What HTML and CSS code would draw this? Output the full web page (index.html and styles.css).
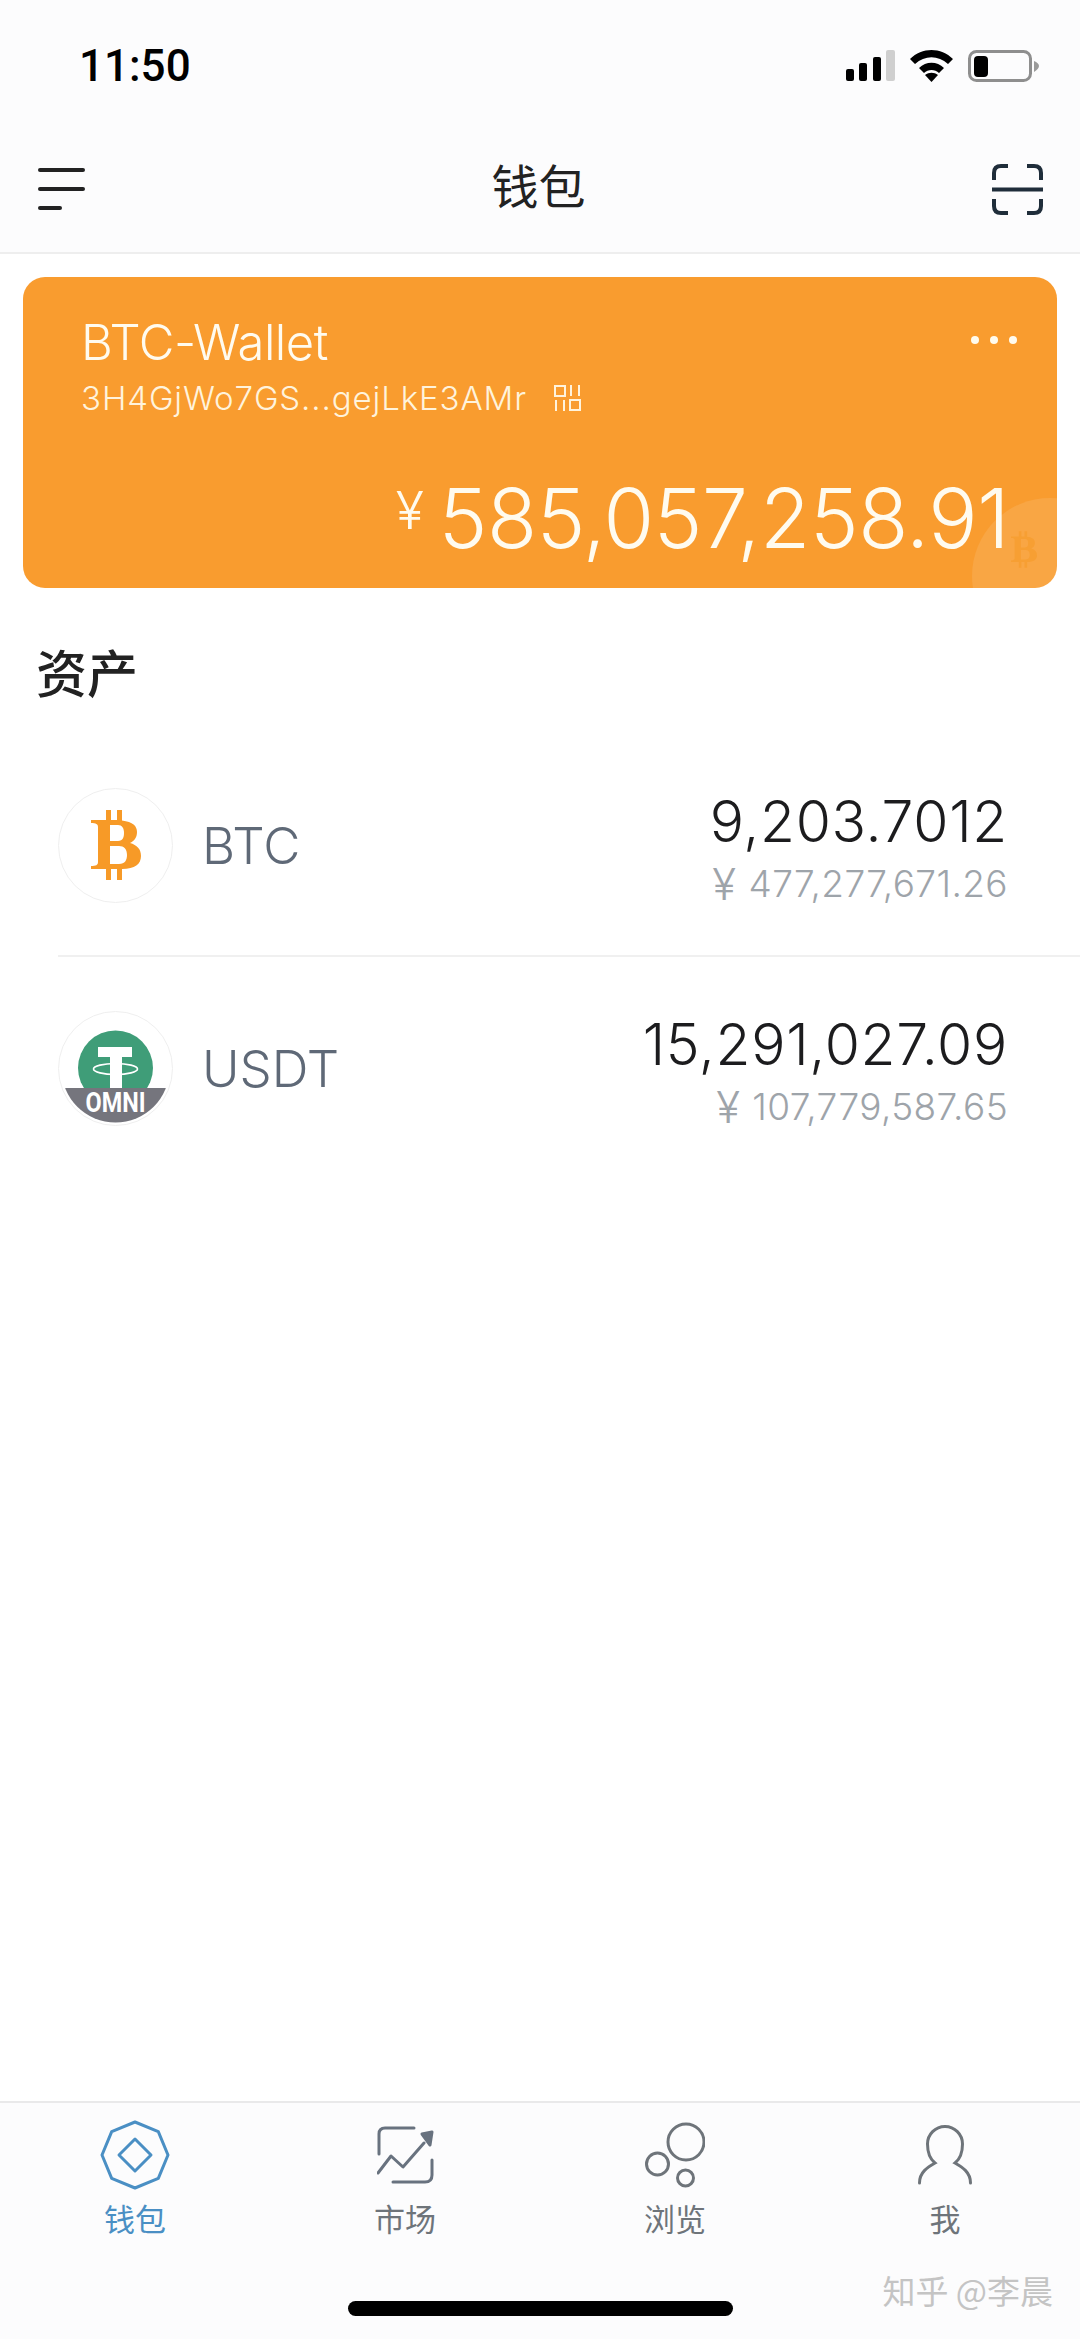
FILE: index.html
```html
<!DOCTYPE html>
<html lang="zh-CN">
<head>
  <meta charset="UTF-8">
  <meta name="viewport" content="width=device-width, initial-scale=1.0">
  <title>钱包</title>
  <link rel="stylesheet" href="styles.css">
</head>
<body>
  <div class="app">
    <div class="status">
      <span class="time">11:50</span>
      <div class="status-icons">
        <svg class="signal" width="49" height="32" viewBox="0 0 49 32">
          <rect x="0" y="19" width="8" height="12" rx="2" fill="#000"/>
          <rect x="13" y="13" width="8" height="18" rx="2" fill="#000"/>
          <rect x="27" y="7" width="8" height="24" rx="2" fill="#000"/>
          <rect x="40" y="0" width="9" height="31" rx="2" fill="#cfcfcf"/>
        </svg>
        <svg width="43" height="32" viewBox="0 0 43 32">
          <path d="M0 9C12-3 31-3 43 9L38 14C28 5 15 5 5 14Z" fill="#000"/>
          <path d="M9 18C16 11 27 11 34 18L29 23C25 19 18 19 14 23Z" fill="#000"/>
          <path d="M21.5 32L15 25C19 22 24 22 28 25Z" fill="#000"/>
        </svg>
        <svg width="71" height="32" viewBox="0 0 71 32">
          <rect x="1.5" y="1.5" width="61" height="29" rx="7" fill="none" stroke="#8e8e8e" stroke-width="3"/>
          <rect x="6" y="6" width="14" height="21" rx="4" fill="#000"/>
          <path d="M66 11C69 12 71 14 71 16C71 18 69 20 66 22Z" fill="#9a9a9a"/>
        </svg>
      </div>
    </div>

    <div class="nav">
      <div class="menu-icon"><i></i><i></i><i class="short"></i></div>
      <span class="nav-title">钱包</span>
      <svg width="51" height="51" viewBox="0 0 51 51" fill="none" stroke="#1f2d3a" stroke-width="4">
        <path d="M16 2H9Q2 2 2 9V16"/>
        <path d="M35 2H42Q49 2 49 9V16"/>
        <path d="M2 35V42Q2 49 9 49H16"/>
        <path d="M49 35V42Q49 49 42 49H35"/>
        <path d="M0 25.5H51"/>
      </svg>
    </div>

    <div class="card">
      <div class="card-corner">
        <svg width="26" height="37" viewBox="0 0 50 70">
          <path fill="#f79f33" fill-rule="evenodd" d="M15 0H20V10H26V0H31V10.5C42 12 46 16 46 22C46 28 43 31 39 33C46 35 50 39 50 46C50 54 44 59 31 59V70H26V59H20V70H15V59H0V56C5 56 7 55 7 52V17C7 14 5 13 0 13V10H15ZM19 15V31H27C32 31 33 27 33 23C33 18 31 15 27 15ZM19 36V54H28C34 54 36 50 36 45C36 39 33 36 28 36Z"/>
        </svg>
      </div>
      <div class="card-head">
        <span class="card-name">BTC-Wallet</span>
        <div class="dots"><i></i><i></i><i></i></div>
      </div>
      <div class="card-address">
        <span>3H4GjWo7GS...gejLkE3AMr</span>
        <svg width="27" height="26" viewBox="0 0 27 26" fill="none" stroke="#fff3dc" stroke-width="2">
          <rect x="1" y="1" width="10" height="10"/>
          <rect x="16" y="15" width="10" height="10"/>
          <path d="M17 0V11M25 0V11M2 15V26M10 15V26"/>
        </svg>
      </div>
      <div class="card-total"><span class="yen">¥</span><span class="total">585,057,258.91</span></div>
    </div>

    <h3 class="section-title">资产</h3>

    <div class="asset">
      <div class="coin">
        <svg width="50" height="70" viewBox="0 0 50 70">
          <path fill="#f79a27" fill-rule="evenodd" d="M15 0H20V10H26V0H31V10.5C42 12 46 16 46 22C46 28 43 31 39 33C46 35 50 39 50 46C50 54 44 59 31 59V70H26V59H20V70H15V59H0V56C5 56 7 55 7 52V17C7 14 5 13 0 13V10H15ZM19 15V31H27C32 31 33 27 33 23C33 18 31 15 27 15ZM19 36V54H28C34 54 36 50 36 45C36 39 33 36 28 36Z"/>
        </svg>
      </div>
      <span class="asset-name">BTC</span>
      <div class="asset-values">
        <span class="amount">9,203.7012</span>
        <span class="worth"><span class="worth-yen">¥</span>477,277,671.26</span>
      </div>
    </div>

    <div class="asset">
      <div class="coin">
        <svg width="115" height="115" viewBox="0 0 115 115">
          <defs>
            <clipPath id="coin-clip"><circle cx="57.5" cy="57.5" r="54"/></clipPath>
          </defs>
          <circle cx="57.5" cy="57" r="37.5" fill="#3f9d78"/>
          <path d="M40 36H74V46H64V78H52V46H40Z" fill="#fff"/>
          <ellipse cx="57.5" cy="58" rx="22" ry="5.5" fill="none" stroke="#fff" stroke-width="1.6"/>
          <rect x="0" y="77" width="115" height="38" fill="#75757d" clip-path="url(#coin-clip)"/>
          <text class="omni" x="57.5" y="101" text-anchor="middle" textLength="60" lengthAdjust="spacingAndGlyphs">OMNI</text>
        </svg>
      </div>
      <span class="asset-name">USDT</span>
      <div class="asset-values">
        <span class="amount">15,291,027.09</span>
        <span class="worth"><span class="worth-yen">¥</span>107,779,587.65</span>
      </div>
    </div>

    <div class="tabs">
      <div class="tab active">
        <div class="tab-icon">
          <svg width="70" height="70" viewBox="0 0 70 70" fill="none" stroke="#4a8fc4" stroke-width="3" stroke-linejoin="round">
            <path d="M35 2L58.3 11.7L68 35L58.3 58.3L35 68L11.7 58.3L2 35L11.7 11.7Z"/>
            <path d="M35 19L51 35L35 51L19 35Z"/>
          </svg>
        </div>
        <span>钱包</span>
      </div>
      <div class="tab">
        <div class="tab-icon">
          <svg width="57" height="58" viewBox="0 0 57 58" fill="none" stroke="#68727f" stroke-width="3" stroke-linecap="round" stroke-linejoin="round">
            <path d="M37 2H8Q2 2 2 8V28"/>
            <path d="M55 34V49Q55 56 48 56H16"/>
            <path d="M1 47L14 30L26 41L47 17"/>
            <path d="M55 6L45 8L53 19Z" fill="#68727f"/>
          </svg>
        </div>
        <span>市场</span>
      </div>
      <div class="tab">
        <div class="tab-icon">
          <svg width="60" height="68" viewBox="0 0 60 68" fill="none" stroke="#6e747a" stroke-width="3">
            <circle cx="41" cy="21" r="18"/>
            <circle cx="12.5" cy="43" r="11"/>
            <circle cx="40.5" cy="57" r="8"/>
          </svg>
        </div>
        <span>浏览</span>
      </div>
      <div class="tab">
        <div class="tab-icon">
          <svg width="54" height="60" viewBox="0 0 54 60" fill="none" stroke="#6e747a" stroke-width="3" stroke-linecap="round">
            <path d="M1.5 58C1.5 47 10 42 17 38C12 34 9.5 27 9.5 19A17.5 17.5 0 0 1 44.5 19C44.5 27 42 34 37 38C44 42 52.5 47 52.5 58"/>
          </svg>
        </div>
        <span>我</span>
      </div>
    </div>

    <div class="home-bar"><i></i></div>
    <span class="watermark">知乎 @李晨</span>
  </div>
</body>
</html>
```

FILE: styles.css
```css
* { box-sizing: border-box; }
body { margin: 0; background: #fff; font-family: Inter, "Noto Sans CJK SC", sans-serif; }
.app { position: relative; width: 1080px; height: 2339px; display: flex; flex-direction: column; overflow: hidden; }

.status { height: 132px; padding: 0 41px 0 79px; display: flex; align-items: center; justify-content: space-between; background: #fcfcfd; }
.time { font-family: Roboto, sans-serif; font-size: 44px; font-weight: 500; color: #000; }
.status-icons { display: flex; align-items: center; gap: 15px; }

.nav { height: 122px; padding: 0 37px 6px 38px; display: flex; align-items: center; justify-content: space-between; background: #fcfcfd; border-bottom: 2px solid #eeeeee; }
.nav-title { padding-bottom: 12px; font-family: "Noto Sans CJK SC", sans-serif; font-size: 47px; color: #222; }
.menu-icon { width: 47px; display: flex; flex-direction: column; gap: 15px; }
.menu-icon i { display: block; height: 4px; border-radius: 2px; background: #222; }
.menu-icon .short { width: 24px; }

.card { position: relative; height: 311px; margin: 23px 23px 0; padding: 40px 40px 24px 58px; display: flex; flex-direction: column; border-radius: 22px; background: #f99c2f; color: #fffbef; overflow: hidden; }
.card-corner { position: absolute; right: -71px; bottom: -66px; width: 156px; height: 156px; padding: 33px 0 0 39px; border-radius: 50%; background: rgba(255,255,255,0.1); }
.card-head { display: flex; align-items: center; justify-content: space-between; }
.card-name { font-size: 49px; font-weight: 300; line-height: 52px; letter-spacing: -0.5px; }
.dots { margin-bottom: 6px; display: flex; gap: 11px; }
.dots i { display: block; width: 8px; height: 8px; border-radius: 50%; background: #fffbef; }
.card-address { margin-top: 10px; display: flex; align-items: center; gap: 27px; font-size: 33px; font-weight: 300; line-height: 38px; letter-spacing: 0.9px; color: #fff3dc; }
.card-total { position: relative; margin-top: auto; margin-right: 8px; display: flex; justify-content: flex-end; align-items: flex-start; gap: 15px; }
.yen { font-size: 52px; font-weight: 300; line-height: 74px; }
.total { font-size: 82px; font-weight: 300; line-height: 90px; letter-spacing: -0.4px; }

.section-title { margin: 47px 0 28px; padding-left: 36px; font-family: "Noto Sans CJK SC", sans-serif; font-size: 51px; font-weight: 500; line-height: 72px; color: #222; }

.asset { height: 222px; margin-left: 58px; padding-right: 72px; display: flex; align-items: center; border-bottom: 2px solid #f0f0f0; }
.asset + .asset { border-bottom: none; }
.coin { width: 115px; height: 115px; margin-right: 29px; display: flex; align-items: center; justify-content: center; border: 1px solid #efefef; border-radius: 50%; }
.coin svg { flex: none; }
.omni { font-family: Roboto, sans-serif; font-size: 28px; font-weight: 700; fill: #fff; }
.asset-name { font-size: 51px; font-weight: 300; color: #5f6977; }
.asset-values { margin-left: auto; padding-top: 6px; display: flex; flex-direction: column; align-items: flex-end; }
.amount { font-size: 57px; font-weight: 300; line-height: 72px; letter-spacing: 0.7px; color: #1c1c1e; }
.worth { display: flex; align-items: center; gap: 12px; font-size: 37px; font-weight: 300; line-height: 52px; letter-spacing: 0.4px; color: #9ea4aa; }
.worth-yen { font-size: 44px; }

.tabs { margin-top: auto; height: 190px; padding-top: 17px; display: grid; grid-template-columns: repeat(4, 1fr); background: #fcfcfd; border-top: 2px solid #e9e9ea; }
.tab { display: flex; flex-direction: column; align-items: center; font-family: "Noto Sans CJK SC", sans-serif; font-size: 31px; line-height: 44px; color: #6e747a; }
.tab.active { color: #4a8fc4; }
.tab-icon { height: 70px; margin-bottom: 6px; display: flex; align-items: center; justify-content: center; }

.home-bar { height: 48px; padding-top: 10px; display: flex; justify-content: center; background: #fcfcfd; }
.home-bar i { display: block; width: 385px; height: 15px; border-radius: 8px; background: #000; }
.watermark { position: absolute; right: 27px; bottom: 25px; font-family: "Noto Sans CJK SC", sans-serif; font-size: 33px; color: #c4c4c4; }
```
